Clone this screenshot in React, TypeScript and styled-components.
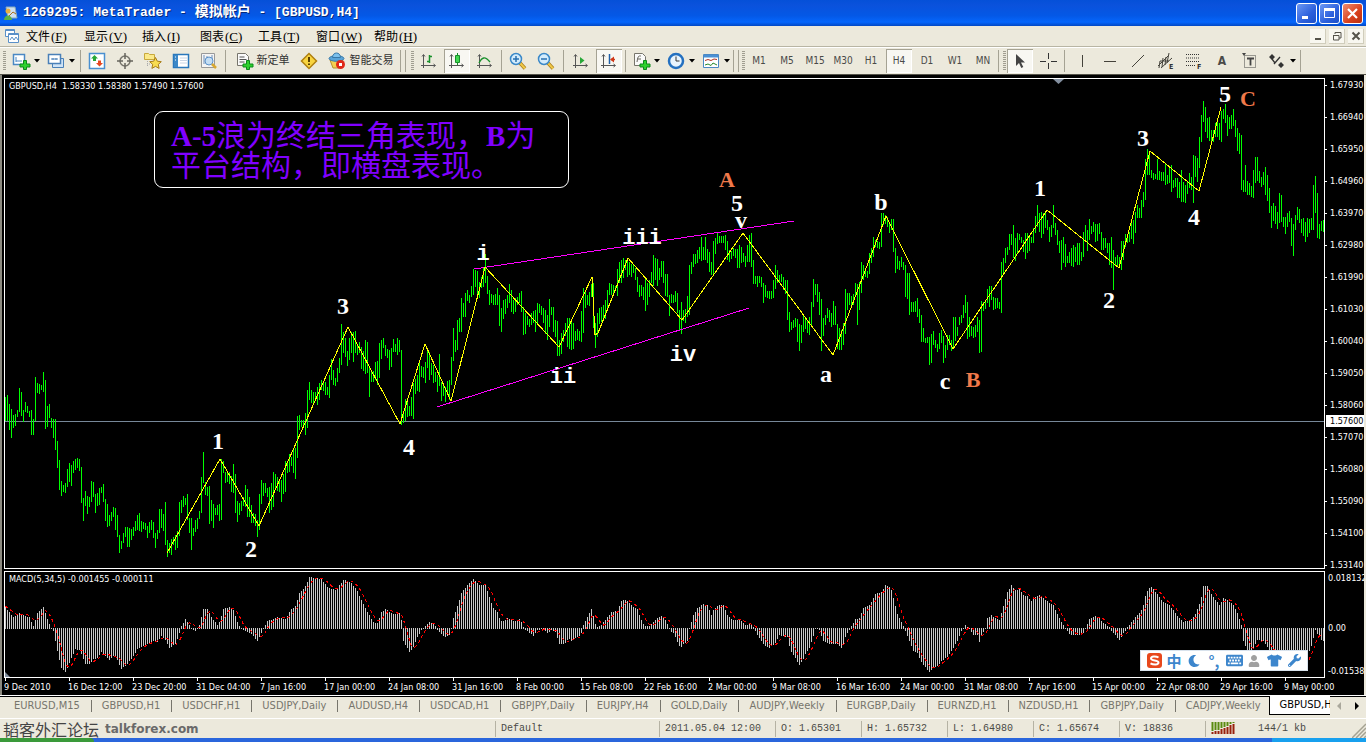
import React from "react";
import styled, { createGlobalStyle } from "styled-components";
import { FaKeyboard, FaMoon, FaTshirt, FaUser, FaWrench } from "react-icons/fa";

const UI = `"DejaVu Sans Condensed", "DejaVu Sans", sans-serif`;
const MONO = `"Liberation Mono", "Noto Sans CJK SC", monospace`;
const CJK = `"Noto Sans CJK SC", sans-serif`;
const SERIF = `"Liberation Serif", "Noto Sans CJK SC", serif`;
const FACE = "#ece9dc";

/* ---------- market data ---------- */

// High and low of each bar, as chart rows; one run per stretch of history.
const priceRuns: { start: number; bars: string }[] = [
  {
    start: 5,
    bars:
      "397,421 395,421 404,430 409,438 415,428 414,426 410,417 388,412 392,416 410,422 402,412 406,413 411,417 410,435 419,435 377,421 383,393 384,394 385,390 372,392 380,429 406,427 404,418 418,428 419,438 419,450 441,468 460,490 481,496 485,492 483,493 469,487 463,482 465,486 461,473 459,470 458,468 459,471 467,503 498,521 491,506 496,514 497,507 481,502 482,497 494,513 493,506 488,505 487,493 484,502 499,521 504,527 515,526 512,521 507,517 508,530 515,537 535,553 541,549 533,543 527,537 527,547 528,547 529,540 527,536 521,531 515,530 513,531 521,532 522,529 523,530 526,538 522,533 520,530 522,538 533,548 530,539 509,533 509,528 514,531 502,545 540,557 543,553 539,555 537,545 535,550 531,548 502,536 500,513 496,507 498,505 494,520 518,533 518,550 528,536 520,532 518,529 511,519 477,513 452,483 482,495 487,496 486,524 500,521 504,528 508,515 505,515 504,521 459,520 461,473 472,483 473,482 472,484 476,492 464,493 474,513 501,522 503,515 501,511 497,506 485,507 489,517 497,517 505,523 513,523 514,526 520,537 494,530 480,504 483,496 483,493 488,497 487,513 483,510 472,507 474,489 477,491 480,492 480,502 474,494 461,492 463,473 454,472 457,466 448,473 448,479 416,458 415,430 420,427 420,427 413,435 390,428 382,400 390,403 392,403 392,400 387,405 383,400 380,390 382,391 382,395 387,395 375,398 359,380 370,385 378,386 368,382",
  },
  {
    start: 339,
    bars:
      "358,373 324,365 332,353 338,357 351,366 338,360 332,353 332,362 331,353 344,355 342,353 347,369 351,371 340,374 342,373 366,397 370,382 371,382 362,380 361,385 343,378 340,359 338,348 345,356 349,358 350,370 348,367 339,352 344,352 338,355 340,352 350,425 413,423 399,421 401,417 406,416 397,416 383,419 379,394 375,391 361,392 366,377 367,378 362,383 348,368 352,380 363,375 365,383 372,382 375,392 354,386 382,401 386,396 387,402 381,395 380,400 357,385 328,361 340,352 320,350 318,332 298,332 303,317 293,317 290,301 295,303 286,297",
  },
  {
    start: 473,
    bars:
      "269,295 270,287 271,297 282,298 277,288 268,287 254,283 276,294 290,305 294,303 295,305 294,305 288,305 295,326 308,332 300,319 299,314 295,308 284,303 290,312 300,314 298,312 297,305 293,303 291,312 307,335 313,334 316,325 319,327 313,325 311,323 310,332 303,323 304,313 306,315 308,323 310,334 315,340 299,327 307,315 307,332 320,337 321,356 340,356 333,354 330,342 323,336 318,347 318,349 320,350 323,349 331,341 329,340 331,341 311,342 288,333 290,308 295,305 292,306 284,297 283,328 323,348 313,337 308,324 307,322 305,320 300,319 290,310 283,295 284,295 285,293 286,291 269,296 262,283 260,283 258,278 260,270 261,277 262,275 264,277 265,273 268,280 277,292 285,297 285,296 287,300 279,311 283,305 280,297 272,283 255,286 258,280 259,286 268,280 261,277 261,283 274,296 274,297 295,316 294,303 295,303 291,302 293,313 310,331 302,334 310,321 309,323 296,317 265,315 262,274 254,267 254,264 250,263 247,259 237,261 247,260 237,260 249,263 252,272 262,275 241,274 238,254 232,244 236,243 236,243 236,243 235,250 241,260 250,262 251,259 248,256 249,258 249,268 245,268 247,263 253,262 256,267 245,262 235,262 233,267 260,284 276,284 276,287 276,283 277,287 283,303 285,297 291,298 291,299 291,299 280,298 265,289 270,283 275,283 274,282 277,290 280,294 280,320 312,332 322,330 320,328 318,327 319,342 324,351 325,343 315,332 317,329 320,333 317,335 302,327 279,307 284,295 284,302 292,315 299,351 318,336 315,325 308,318 310,322 313,327 301,325 306,325 324,349 328,350 330,350 323,345 289,334 293,310 293,305 296,306 294,305 283,297 284,325 282,310",
  },
  {
    start: 861,
    bars:
      "262,293 265,280 270,277 271,278 253,274 248,263 237,257 240,247 241,248 242,249 213,247 213,225 215,224 217,227 224,233 219,230 219,252 248,273 256,269 261,270 257,267 262,270 265,297 273,299 273,315 302,312 302,312 301,312 298,317 309,323 315,342 328,342 338,343 337,343 337,365 334,363 331,345 340,348 344,352 333,349 330,343 336,363 345,358 335,350 335,345 340,351 317,347 317,341 327,336 317,325 315,323 305,318 295,313 302,339 317,337 326,336 327,338 325,337 317,332 320,353 301,352 302,311 300,309 289,303 286,307 286,300 297,310 298,309 298,308 302,309 262,313 258,273 248,263 247,255 234,250 234,245 225,258 238,261 233,253 234,240 237,243 240,252 233,259 233,253 235,251 237,243 228,243 216,233 205,227 213,232 212,238 213,234 213,228 220,230 227,242 225,237 205,228 223,235 230,245 241,253 240,270 237,263 244,267 256,263 252,263 248,266 245,267 247,262 243,265 243,265 252,261 232,257 225,240 230,251 219,240 226,234 222,232 224,242 224,241 223,234 232,250 238,250 238,248 243,253 243,265 237,268 250,290 257,265 255,267 257,267 241,270 241,260 234,247 234,243 232,242 223,239 220,244 212,233 205,218 208,218 200,218 192,207 159,200 149,175 152,175 170,178 173,180 174,179 159,180 171,180 172,181 172,181 164,185 175,184 168,183 165,192 180,188 178,187 178,198 182,198 170,202 182,202 185,203 182,194 173,188 177,190 155,203 156,177 158,182 137,168 115,142 101,122 107,132 118,138 117,141 130,141 130,142 123,137 120,137 123,140 111,142 109,119 104,123 115,136 117,129 115,129 109,126 120,137 128,151 133,154 135,190 180,192 165,192 181,195 183,195 186,197 170,198 157,183 157,181 171,183 177,187 172,185 167,195 175,201 188,213 206,228 203,221 206,224 212,229 193,223 195,222 217,227 217,234 213,227 211,222 218,246 224,256 215,230 207,220 209,223 219,233 218,236 222,242 218,237 219,233 218,230 185,230 176,213 193,238 224,239 221,231 220,232",
  },
];

const pricePath = priceRuns
  .map(({ start, bars }) =>
    bars
      .split(" ")
      .map((b, i) => {
        const [hi, lo] = b.split(",");
        return `M${start + i * 2 + 0.5} ${hi}V${lo}`;
      })
      .join("")
  )
  .join("");

// Turning points of the oscillator: column, row.
const macdPoints: number[][] = (
  "5,606 7,610 13,617 19,613 25,616 29,617 33,626 37,613 43,607 47,619 50,627 53,630 57,650 61,667 65,671 69,662 75,648 79,649 81,653 85,663 89,663 93,658 97,657 101,651 105,655 109,659 113,655 116,657 119,664 121,668 127,663 133,655 137,648 145,644 153,640 157,641 161,635 165,639 169,647 175,643 179,632 181,626 185,619 189,625 192,629 195,630 199,625 203,609 207,609 211,617 217,625 220,620 223,609 229,607 233,610 237,622 240,628 247,631 251,633 257,640 261,632 267,621 273,619 277,617 285,619 291,609 295,606 299,593 303,589 307,582 309,577 321,579 327,587 335,590 341,583 344,579 351,583 357,591 361,600 367,612 373,622 377,623 381,612 385,609 393,614 399,613 401,620 403,640 409,651 413,646 417,636 421,629 425,626 429,622 433,623 437,629 441,633 445,636 450,633 453,618 457,606 461,593 467,585 473,579 476,582 479,585 485,585 489,597 493,608 497,612 500,621 503,621 507,618 511,620 515,621 520,619 523,627 527,630 533,635 537,629 543,628 547,632 551,629 555,631 559,643 564,643 568,637 571,640 574,637 580,635 583,625 587,617 591,609 594,620 596,628 601,625 607,617 611,612 617,611 621,601 624,599 629,603 633,607 637,609 640,618 644,626 649,626 653,622 657,618 662,616 665,620 670,630 674,633 677,641 680,647 683,643 687,640 689,628 693,615 697,608 703,604 707,605 711,615 713,610 718,605 723,605 727,615 732,620 740,620 746,626 750,623 755,630 759,637 764,644 769,647 775,642 779,634 783,635 787,636 790,650 795,657 799,664 802,660 805,653 809,647 813,635 815,628 820,629 822,640 830,643 837,643 842,648 845,636 848,630 851,626 855,619 859,618 863,608 870,604 875,594 881,592 885,585 889,587 891,590 893,598 897,614 901,622 905,630 909,640 913,650 917,652 921,661 925,666 929,671 933,666 937,665 941,660 947,656 951,650 957,640 961,630 965,625 969,628 973,634 977,634 979,641 981,634 985,628 987,618 991,615 995,618 999,620 1003,606 1007,592 1011,585 1015,590 1019,589 1023,595 1027,596 1031,601 1035,597 1039,595 1043,598 1048,602 1053,605 1057,614 1061,622 1065,628 1070,634 1082,634 1085,628 1089,619 1094,616 1099,618 1103,623 1109,627 1113,632 1119,639 1123,632 1127,627 1131,622 1137,615 1142,609 1146,592 1150,586 1153,589 1159,597 1163,602 1168,604 1173,610 1177,616 1183,622 1191,619 1195,614 1200,602 1203,586 1207,586 1211,594 1219,605 1223,598 1227,600 1233,605 1237,613 1241,625 1243,640 1247,649 1251,651 1257,639 1263,640 1270,650 1277,662 1283,668 1300,668 1307,655 1311,645 1315,629 1320,638 1323,640"
)
  .split(" ")
  .map((p) => p.split(",").map(Number));

const macdAt = (x: number): number => {
  const i = Math.max(1, macdPoints.findIndex((p) => p[0] >= x));
  const [x0, y0] = macdPoints[i - 1];
  const [x1, y1] = macdPoints[i];
  return y0 + ((y1 - y0) * (x - x0)) / (x1 - x0);
};

const ZERO = 628;
const macdColumns = Array.from({ length: 660 }, (_, i) => 5 + i * 2);
const macdValues = macdColumns.map(macdAt);
const macdPath = macdColumns
  .map((x, i) => {
    const y = Math.round(macdValues[i]);
    return y < ZERO ? `M${x + 0.5} ${y}V${ZERO + 1}` : `M${x + 0.5} ${ZERO}V${y + 1}`;
  })
  .join("");
const signalPath = macdColumns
  .map((x, i) => {
    const part = macdValues.slice(Math.max(0, i - 4), i + 1);
    const y = part.reduce((a, b) => a + b, 0) / part.length;
    return `${i ? "L" : "M"}${x + 0.5} ${y.toFixed(1)}`;
  })
  .join("");

const waves: [string, number, number, ("digit" | "roman" | "major")][] = [
  ["1", 218, 449, "digit"], ["2", 251, 557, "digit"], ["3", 343, 314, "digit"], ["4", 409, 455, "digit"],
  ["i", 483, 260, "roman"], ["ii", 563, 383, "roman"], ["iii", 642, 244, "roman"], ["iv", 683, 361, "roman"],
  ["v", 741, 228, "digit"], ["5", 737, 211, "digit"], ["a", 826, 382, "digit"], ["b", 881, 210, "digit"],
  ["c", 945, 389, "digit"], ["1", 1040, 196, "digit"], ["2", 1109, 308, "digit"], ["3", 1143, 146, "digit"],
  ["4", 1194, 225, "digit"], ["5", 1225, 102, "digit"],
  ["A", 727, 187, "major"], ["B", 973, 387, "major"], ["C", 1248, 106, "major"],
];
const waveStyle = {
  digit: { fill: "#fff", fontSize: 24, fontFamily: SERIF },
  roman: { fill: "#fff", fontSize: 22, fontFamily: MONO },
  major: { fill: "#f0794a", fontSize: 22, fontFamily: SERIF },
};

const prices = ["1.67930", "1.66940", "1.65950", "1.64960", "1.63970", "1.62980", "1.61990", "1.61030", "1.60040", "1.59050", "1.58060", "1.57070", "1.56080", "1.55090", "1.54100", "1.53140"];
const times = ["9 Dec 2010", "16 Dec 12:00", "23 Dec 20:00", "31 Dec 04:00", "7 Jan 16:00", "17 Jan 00:00", "24 Jan 08:00", "31 Jan 16:00", "8 Feb 00:00", "15 Feb 08:00", "22 Feb 16:00", "2 Mar 00:00", "9 Mar 08:00", "16 Mar 16:00", "24 Mar 00:00", "31 Mar 08:00", "7 Apr 16:00", "15 Apr 00:00", "22 Apr 08:00", "29 Apr 16:00", "9 May 00:00"];
const tabs = ["EURUSD,M15", "GBPUSD,H1", "USDCHF,H1", "USDJPY,Daily", "AUDUSD,H4", "USDCAD,H1", "GBPJPY,Daily", "EURJPY,H4", "GOLD,Daily", "AUDJPY,Weekly", "EURGBP,Daily", "EURNZD,H1", "NZDUSD,H1", "GBPJPY,Daily", "CADJPY,Weekly"];
const menus: [string, string][] = [["文件", "F"], ["显示", "V"], ["插入", "I"], ["图表", "C"], ["工具", "T"], ["窗口", "W"], ["帮助", "H"]];

/* ---------- frame ---------- */

const Global = createGlobalStyle`
  * { box-sizing: border-box; }
  body { margin: 0; background: ${FACE}; }
  button { font: inherit; color: inherit; margin: 0; padding: 0; border: 0; background: none; }
`;

const Page = styled.div`
  display: flex;
  flex-direction: column;
  height: 100vh;
  overflow: hidden;
  font-family: ${UI};
  white-space: nowrap;
`;

const TitleBar = styled.header`
  display: flex;
  align-items: center;
  flex: none;
  height: 26px;
  padding: 0 3px 0 4px;
  background: linear-gradient(#0550d8, #0a52dc 20%, #0458e6 60%, #0566fc 85%, #0348c4);
  color: #fff;
  font: bold 13px/26px ${MONO};
  text-shadow: 1px 1px 0 #06287a;
`;
const Title = styled.h1`
  flex: 1;
  margin: 0 0 0 5px;
  font: inherit;
  white-space: pre;
`;
const TitleCjk = styled.span`
  font: bold 14px/20px ${CJK};
`;
const Caption = styled.button<{ $close?: boolean }>`
  display: grid;
  place-items: center;
  width: 21px;
  height: 21px;
  margin-left: 2px;
  border: 1px solid #fff;
  border-radius: 3px;
  background: ${(p) => (p.$close ? "linear-gradient(135deg,#f08c70,#d8401c 60%,#b83010)" : "linear-gradient(135deg,#6c98f4,#2c60dc 60%,#1c50c8)")};
`;

const MenuBar = styled.nav`
  display: flex;
  align-items: center;
  flex: none;
  height: 21px;
  padding: 0 2px 0 4px;
  border-bottom: 1px solid #b8b5a4;
  background: ${FACE};
`;
const MenuItem = styled.button`
  width: 58px;
  text-align: left;
  font: 12px/18px ${CJK};
  color: #000;
`;
const Mnemonic = styled.span`
  font: 13px/16px ${SERIF};
  margin-left: 1px;
`;
const MenuFill = styled.div`
  flex: 1;
`;
const ChildButton = styled.button`
  display: grid;
  place-items: center;
  width: 16px;
  height: 15px;
  margin-left: 3px;
  background: #f8f7f0;
  border-right: 1px solid #d0cdbc;
  border-bottom: 1px solid #d0cdbc;
`;

const Toolbar = styled.div`
  display: flex;
  align-items: center;
  flex: none;
  height: 28px;
  border-bottom: 1px solid #55534a;
  background: ${FACE};
  border-top: 1px solid #fff;
`;
const Grip = styled.span<{ $w: number }>`
  flex: none;
  width: ${(p) => p.$w}px;
  height: 20px;
  background: repeating-linear-gradient(#a09d90 0 1px, transparent 1px 2px) 3px 0 / 3px 20px no-repeat;
`;
const Rule = styled.span<{ $w: number; $end?: boolean }>`
  flex: none;
  display: flex;
  justify-content: center;
  width: ${(p) => p.$w}px;
  &::before {
    content: "";
    width: ${(p) => (p.$end ? 4 : 1)}px;
    height: 22px;
    border-left: 1px solid #a5a293;
    border-right: ${(p) => (p.$end ? "1px solid #a5a293" : "0")};
  }
`;
const Tool = styled.button<{ $w?: number; $on?: boolean }>`
  display: flex;
  align-items: center;
  justify-content: center;
  gap: 4px;
  flex: none;
  width: ${(p) => p.$w ?? 28}px;
  height: 24px;
  color: #4a4a48;
  font: 10px/24px ${UI};
  ${(p) => p.$on && "background:#f8f7f2; box-shadow: inset 1px 1px 0 #a5a293, inset -1px -1px 0 #fff; border: solid transparent; border-width: 0 1px;background-clip:padding-box;"}
`;
const ToolText = styled.span`
  font: 11px/20px ${CJK};
  color: #333;
  padding-bottom: 4px;
`;

/* ---------- chart ---------- */

const ChartWindow = styled.main`
  flex: 1;
  min-height: 0;
  display: grid;
  grid-template-columns: minmax(0, 1fr) 39px;
  grid-template-rows: minmax(0, 1fr) 107px 17px;
  row-gap: 2px;
  padding: 3px 0 0 2px;
  border-left: 2px solid #8c8a80;
  border-right: 2px solid ${FACE};
  background: #000;
  color: #fff;
  font: 9px/12px ${UI};
  margin-bottom: -2px;
`;
const Pane = styled.section`
  position: relative;
  min-height: 0;
  border: 1px solid #fff;
  overflow: hidden;
`;
const Plot = styled.svg`
  display: block;
  width: 100%;
  height: 100%;
`;
const PaneTitle = styled.h2`
  position: absolute;
  left: 4px;
  top: 1px;
  margin: 0;
  font: inherit;
  white-space: pre;
`;
const Note = styled.p`
  position: absolute;
  left: 149px;
  top: 32px;
  width: 415px;
  height: 77px;
  margin: 0;
  padding: 6px 0 0 16px;
  border: 1px solid #fff;
  border-radius: 9px;
  color: #8000ff;
  font: 30px/30px ${CJK};
`;
const NoteLatin = styled.span`
  font-weight: bold;
  font-size: 29px;
  font-family: ${SERIF};
  line-height: 1px;
`;
const PriceAxis = styled.div`
  position: relative;
  overflow: hidden;
`;
const Price = styled.div`
  display: flex;
  align-items: center;
  height: 32px;
  gap: 3px;
  &:first-child { margin-top: -9px; }
  &::before {
    content: "";
    width: 2px;
    height: 1px;
    background: #fff;
  }
`;
const CurrentPrice = styled.output`
  position: absolute;
  left: 1px;
  right: 0;
  top: 337px;
  height: 12px;
  padding-left: 4px;
  background: #fff;
  color: #000;
`;
const MacdAxis = styled.div`
  display: flex;
  flex-direction: column;
  justify-content: space-between;
  padding: 1px 0 1px 3px;
  overflow: hidden;
`;
const ZeroLabel = styled.span`
  padding-top: 6px;
`;
const TimeAxis = styled.div`
  grid-column: 1 / -1;
  display: flex;
  margin-top: -2px;
  overflow: hidden;
`;
const Time = styled.span`
  flex: none;
  width: 64px;
  padding-top: 3px;
  background: linear-gradient(#fff, #fff) 1px 0 / 1px 3px no-repeat;
`;

const Ime = styled.aside`
  position: fixed;
  right: 58px;
  bottom: 71px;
  display: flex;
  align-items: center;
  justify-content: space-around;
  width: 168px;
  height: 21px;
  padding: 0 3px;
  background: #fff;
  border: 1px solid #d8e2ec;
  color: #3d86cc;
  font: bold 15px/18px ${CJK};
`;
const ImeButton = styled.button<{ $muted?: boolean }>`
  display: grid;
  place-items: center;
  width: 19px;
  height: 18px;
  color: ${(p) => (p.$muted ? "#a0a0a0" : "#3d86cc")};
`;

/* ---------- bottom ---------- */

const Tabs = styled.div`
  position: relative;
  display: flex;
  flex: none;
  height: 23px;
  border-top: 1px solid #fff;
  box-shadow: inset 0 1px 0 #000;
  background: ${FACE};
  padding-left: 4px;
  font: 11px/20px ${UI};
  color: #77756c;
`;
const TabStrip = styled.div`
  display: flex;
  flex: 1;
  min-width: 0;
  overflow: hidden;
`;
const Tab = styled.button<{ $active?: boolean }>`
  flex: none;
  display: flex;
  align-items: center;
  height: 20px;
  padding-left: 10px;
  ${(p) => p.$active && "height:19px;background:#fff;color:#000;border:1px solid #000;border-width:0 0 1px 1px;"}
  &::after {
    content: "";
    width: 1px;
    height: 12px;
    margin-left: 11px;
    background: ${(p) => (p.$active ? "none" : "#77756c")};
  }
  &:nth-last-child(2)::after { background: none; margin-left: 7px; }
`;
const Scroll = styled.button`
  display: grid;
  place-items: center;
  width: 18px;
  height: 20px;
`;

const StatusBar = styled.footer`
  display: flex;
  flex: none;
  align-items: center;
  height: 20px;
  border-top: 1px solid #fff;
  background: ${FACE};
  color: #4a4a46;
  font: 10px/18px ${MONO};
`;
const Cell = styled.div<{ $w: number }>`
  flex: none;
  width: ${(p) => p.$w}px;
  height: 16px;
  padding-left: 5px;
  line-height: 16px;
  border-left: 1px solid #b5b2a3;
`;
const Traffic = styled.span`
  flex: none;
  width: 99px;
  padding-left: 5px;
`;
const Mark = styled.div`
  flex: 1;
  display: flex;
  align-items: center;
  gap: 6px;
  padding-left: 3px;
  color: #444;
  font: 16px/18px ${CJK};
`;
const MarkLatin = styled.b`
  color: #6a6a6a;
  font: bold 12px/18px "DejaVu Sans", sans-serif;
`;
const TaskBar = styled.div`
  display: flex;
  flex: none;
  height: 4px;
  background: #2a66dc;
`;
const Start = styled.span`
  width: 94px;
  border-radius: 0 4px 0 0;
  background: #3a9a3a;
`;
const Tray = styled.span`
  width: 94px;
  margin-left: auto;
  background: #18a0ee;
`;

/* ---------- drawings ---------- */

const Arrow = () => (
  <svg width="6" height="4"><path d="M0 0h6L3 3.500z" fill="#000" /></svg>
);
const I = ({ children, w = 18 }: { children: React.ReactNode; w?: number }) => (
  <svg width={w} height="18" viewBox={`0 0 ${w} 18`} fill="none" overflow="visible">{children}</svg>
);
const plus = <path d="M8 13h3.500v-3.500h3V13H18v3h-3.500v2.500h-3V16H8z" transform="translate(0 -1)" fill="#2ed02e" stroke="#0a8a1a" />;
const sheet = <path d="M2.500 1.500h8l3 3v9h-11z" fill="#fafafa" stroke="#77756c" />;
const axes = <path d="M3.500 3v13M1 13.500h14M2 4.500l1.500-2 1.500 2M13.500 12l2 1.500-2 1.500" stroke="#555" />;

const NewChart = () => <I><path d="M1.500 2.500h11v10h-11z" fill="#fff" stroke="#4a88c4" strokeWidth="1.500" /><path d="M4 5v5M4 9h6" stroke="#4a88c4" />{plus}</I>;
const Profiles = () => <I><path d="M5.500 6.500h11v9h-11z" fill="#cfe3f6" stroke="#4a80b8" /><path d="M1.500 2.500h12v9h-12z" fill="#fff" stroke="#4a80b8" strokeWidth="1.500" /><path d="M4 7h7M6 6v2M9 6v2" stroke="#4a80b8" /></I>;
const Market = () => <I><path d="M1.500 1.500h15v15h-15z" fill="#fff" stroke="#4a90d0" strokeWidth="1.500" /><path d="M6.500 3L10 6.500H8V9H5V6.500H3z" fill="#28a838" /><path d="M11.500 14.500L8 11h2V8.500h3V11h2z" fill="#e84820" /></I>;
const Target = () => <I><circle cx="9" cy="9" r="5" stroke="#77756c" strokeWidth="1.500" /><path d="M9 1v6M9 11v6M1 9h6M11 9h6" stroke="#66645c" strokeWidth="1.500" /></I>;
const Navigator = () => <I><path d="M.5 1.500h4l1 1h5v5H.5z" fill="#fbe98a" stroke="#c8a83c" /><path d="M3.500 9v6M3 12h3" stroke="#aaa" strokeDasharray="1 1" /><path d="M11.500 5.500l1.800 3.700 4 .5-3 2.700.8 4-3.600-2-3.600 2 .8-4-3-2.700 4-.5z" fill="#f8dc50" stroke="#a87c18" /></I>;
const Terminal = () => <I><path d="M1.500 2.500h15v13h-15z" fill="#fff" stroke="#2a78bc" strokeWidth="1.500" /><path d="M2 3h4v12H2z" fill="#3c88c8" /><path d="M8 6h7M8 8.500h7M8 11h7" stroke="#c8d4e4" /><path d="M3 5h1M3 8h1" stroke="#fff" /></I>;
const Tester = () => <I><path d="M1.500 1.500h13v14h-13z" fill="#f4f4f4" stroke="#999" /><path d="M4 3v9M7 4v8M12 3v5" stroke="#7090b8" /><circle cx="9" cy="9" r="4" fill="#c4def4" stroke="#5a90c8" /><path d="M12 12l4 4" stroke="#d8a830" strokeWidth="2.500" /></I>;
const NewOrder = () => <I>{sheet}<path d="M4.500 5h5M4.500 7.500h7M4.500 10h5" stroke="#555" />{plus}</I>;
const Caution = () => <I><path d="M9 1.500L16.500 9 9 16.500 1.500 9z" fill="#f8d440" stroke="#b08010" strokeWidth="1.500" /><path d="M9 5v5M9 11.500v1.500" stroke="#5a4000" strokeWidth="2" /></I>;
const Expert = () => <I><path d="M2 8h13l-4 8H5z" fill="#f4d050" stroke="#b89030" /><ellipse cx="8.500" cy="6.500" rx="7.500" ry="2.800" fill="#5aa4d8" stroke="#3878a8" /><path d="M4.500 5.500c0-6 8-6 8 0z" fill="#7cc0ec" stroke="#3878a8" /><circle cx="12.500" cy="12.500" r="4.500" fill="#e02818" /><path d="M11 11h3v3h-3z" fill="#fff" /></I>;
const BarsIcon = () => <I>{axes}<path d="M9.500 3v8M7 9.500h2.500M9.500 4.500H12" stroke="#18902a" strokeWidth="1.500" /></I>;
const Candles = () => <I>{axes}<path d="M9.500 1v12" stroke="#18902a" /><path d="M7.500 3.500h4v7h-4z" fill="#40d850" stroke="#18902a" /></I>;
const LineIcon = () => <I>{axes}<path d="M3 11c3-6 6-7 11-1" stroke="#18902a" strokeWidth="1.300" /></I>;
const Zoom = ({ out }: { out?: boolean }) => <I><path d="M11 11l5 5.500" stroke="#a87c18" strokeWidth="3.500" /><path d="M11 11l5 5.500" stroke="#f0c848" strokeWidth="2" /><circle cx="7" cy="7" r="5.500" fill="#d4ecfc" stroke="#3a88c8" strokeWidth="1.500" /><path d={out ? "M4 7h6" : "M4 7h6M7 4v6"} stroke="#2870b0" strokeWidth="1.500" /></I>;
const Scrolling = () => <I>{axes}<path d="M8 5l4.500 3.500L8 12z" fill="#28a838" /></I>;
const Shift = () => <I>{axes}<path d="M9.500 2v10" stroke="#2060a8" strokeWidth="1.500" /><path d="M15 7.500h-4" stroke="#d03818" strokeWidth="1.500" /><path d="M14 4.500v6l-4-3z" fill="#d03818" /></I>;
const Indicators = () => <I>{sheet}<path d="M5 10c1-7 2-6 4-6M5 7h4" stroke="#66645c" />{plus}</I>;
const Clock = () => <I><circle cx="9" cy="9" r="7" fill="#e8f4fe" stroke="#2470c0" strokeWidth="2.500" /><path d="M9 4.500V9h3.500" stroke="#333" /></I>;
const Template = () => <I><path d="M1.500 2.500h15v13h-15z" fill="#fff" stroke="#4a88c4" /><path d="M2 3h14v2.500H2z" fill="#4a90d4" /><path d="M3 8.500l3-1 3 1 3-1.500 3 .5" stroke="#b03020" /><path d="M3 13l3-1 3 1.500 2-2.500 4 2" stroke="#28882c" /></I>;
const Cursor = () => <I><path d="M5 2v12l3-3 2.300 5 2-1-2.300-4.500H14z" fill="#444" /></I>;
const Cross = () => <I><path d="M9.500 1v6M9.500 11v6M1 9.500h6M12 9.500h6" stroke="#333" /></I>;
const Stroke = ({ d }: { d: string }) => <I><path d={d} stroke="#44423a" /></I>;
const Letter = styled.tspan`
  font: bold 7px ${UI};
`;
const Channel = () => <I><path d="M1 14L11 4M4 16L15 6M3 9l-1 7M6 6l-1 9M9 5l-1 8M12 1l-2 10M3 9h9" stroke="#44423a" /><text x="12" y="17" fill="#333"><Letter>E</Letter></text></I>;
const Fibo = () => <I><path d="M1 2.500h14M1 6h14M1 9.500h14M1 13.500h9" stroke="#333" strokeDasharray="1 1" /><text x="12" y="17" fill="#333"><Letter>F</Letter></text></I>;
const Label = () => <I><path d="M3.500 3.500h11v12h-11z" stroke="#444" strokeDasharray="1 1" /><path d="M6 6.500h7M9.500 6.500v7" stroke="#444" strokeWidth="1.800" /><path d="M1 1h4L3 4z" fill="#444" /></I>;
const Arrows = () => <I><path d="M1 5l3-3 3 3-3 3zM10 13l3-3 3 3-3 3z" fill="#333" /><path d="M6 12l6-7M4 7l3 4" stroke="#333" strokeWidth="1.300" /></I>;
const GlyphA = styled.span`
  font: bold 12px/24px ${UI};
`;

export default function App() {
  return (
    <Page>
      <Global />
      <TitleBar>
        <svg width="14" height="16"><path d="M2 2h9l2 11H4z" fill="#cfe0f0" stroke="#8ab" /><circle cx="4" cy="6" r="2.500" fill="#e8b040" /><path d="M0 15c0-6 8-6 8 0z" fill="#58b048" /><path d="M5 11l4-4 3 2" stroke="#a8701c" fill="none" /></svg>
        <Title>1269295: MetaTrader - <TitleCjk>模拟帐户</TitleCjk> - [GBPUSD,H4]</Title>
        <Caption aria-label="Minimize"><svg width="13" height="13"><path d="M2 9h6v3H2z" fill="#fff" /></svg></Caption>
        <Caption aria-label="Maximize"><svg width="13" height="13"><path d="M1.500 2.500h10v8h-10z" fill="none" stroke="#fff" /><path d="M1 1h11v3H1z" fill="#fff" /></svg></Caption>
        <Caption $close aria-label="Close"><svg width="13" height="13"><path d="M2 2l9 9M11 2l-9 9" stroke="#fff" strokeWidth="2.200" /></svg></Caption>
      </TitleBar>

      <MenuBar>
        <svg width="22" height="16" fill="none"><path d="M1.500 1.500h9v7h-9z" fill="#fff" stroke="#5a90c8" /><path d="M4.500 5.500h10v9h-10z" fill="#fff" stroke="#5a90c8" /><path d="M1 2.500h10M4 6.500h11M6 12l2-3 2 3 2-3 2 3" stroke="#5a90c8" /></svg>
        {menus.map(([name, key]) => (
          <MenuItem key={key}>{name}<Mnemonic>(<u>{key}</u>)</Mnemonic></MenuItem>
        ))}
        <MenuFill />
        <ChildButton aria-label="Minimize chart"><svg width="10" height="10"><path d="M2 8h6" stroke="#55534a" strokeWidth="2" /></svg></ChildButton>
        <ChildButton aria-label="Restore chart"><svg width="10" height="10" fill="none" stroke="#55534a"><path d="M3 3V1.500h6V7H7M1 4.500h6v4.500H1.500V4" /></svg></ChildButton>
        <ChildButton aria-label="Close chart"><svg width="10" height="10"><path d="M1.500 1.500l7 7M8.500 1.500l-7 7" stroke="#55534a" strokeWidth="2" /></svg></ChildButton>
      </MenuBar>

      <Toolbar>
        <Grip $w={8} />
        <Tool $w={35} aria-label="New chart"><NewChart /><Arrow /></Tool>
        <Tool $w={35} aria-label="Profiles"><Profiles /><Arrow /></Tool>
        <Rule $w={5} />
        <Tool aria-label="Market watch"><Market /></Tool>
        <Tool aria-label="Data window"><Target /></Tool>
        <Tool aria-label="Navigator"><Navigator /></Tool>
        <Tool aria-label="Terminal"><Terminal /></Tool>
        <Tool aria-label="Tester"><Tester /></Tool>
        <Rule $w={6} />
        <Tool $w={66}><NewOrder /><ToolText>新定单</ToolText></Tool>
        <Tool aria-label="Editor"><Caution /></Tool>
        <Tool $w={75}><Expert /><ToolText>智能交易</ToolText></Tool>
        <Rule $w={10} $end />
        <Grip $w={7} />
        <Tool aria-label="Bar chart"><BarsIcon /></Tool>
        <Tool $on aria-label="Candlesticks"><Candles /></Tool>
        <Tool aria-label="Line chart"><LineIcon /></Tool>
        <Rule $w={5} />
        <Tool aria-label="Zoom in"><Zoom /></Tool>
        <Tool aria-label="Zoom out"><Zoom out /></Tool>
        <Rule $w={7} />
        <Tool aria-label="Auto scroll"><Scrolling /></Tool>
        <Tool $on aria-label="Chart shift"><Shift /></Tool>
        <Rule $w={5} />
        <Tool $w={35} aria-label="Indicators"><Indicators /><Arrow /></Tool>
        <Tool $w={35} aria-label="Periodicity"><Clock /><Arrow /></Tool>
        <Tool $w={35} aria-label="Templates"><Template /><Arrow /></Tool>
        <Rule $w={6} $end />
        <Grip $w={6} />
        {["M1", "M5", "M15", "M30", "H1", "H4", "D1", "W1", "MN"].map((t) => (
          <Tool key={t} $on={t === "H4"}>{t}</Tool>
        ))}
        <Rule $w={3} />
        <Grip $w={6} />
        <Tool $on aria-label="Cursor"><Cursor /></Tool>
        <Tool aria-label="Crosshair"><Cross /></Tool>
        <Rule $w={6} />
        <Tool aria-label="Vertical line"><Stroke d="M9.500 3v12" /></Tool>
        <Tool aria-label="Horizontal line"><Stroke d="M3 9.500h12" /></Tool>
        <Tool aria-label="Trendline"><Stroke d="M3 15L15 3" /></Tool>
        <Tool aria-label="Channel"><Channel /></Tool>
        <Tool aria-label="Fibonacci"><Fibo /></Tool>
        <Tool><GlyphA>A</GlyphA></Tool>
        <Tool aria-label="Text label"><Label /></Tool>
        <Tool $w={35} aria-label="Arrows"><Arrows /><Arrow /></Tool>
        <Rule $w={4} />
      </Toolbar>

      <ChartWindow>
        <Pane>
          <Plot viewBox="5 79 1319 489" preserveAspectRatio="xMaxYMid slice">
            <path d="M5 421.500H1324" stroke="#778899" />
            <path d={pricePath} stroke="#00ff00" shapeRendering="crispEdges" />
            <path d="M474 269L794 221M437 407L749 308" stroke="#ff00ff" fill="none" shapeRendering="crispEdges" />
            <polyline
              points="167,553 220,459 259,526 348,327 400,424 425,344 451,401 485,267 559,347 592,277 595,335 598,333 628,258 682,320 743,233 833,355 886,216 953,349 1047,210 1119,268 1150,151 1199,191 1221,107"
              fill="none" stroke="#ffff00" shapeRendering="crispEdges"
            />
            <path d="M1053 79h11l-5.500 5z" fill="#8490a0" />
            {waves.map(([t, x, y, kind]) => (
              <text key={`${t}${x}`} x={x} y={y} textAnchor="middle" fontWeight="bold" {...waveStyle[kind]}>{t}</text>
            ))}
          </Plot>
          <PaneTitle>GBPUSD,H4  1.58330 1.58380 1.57490 1.57600</PaneTitle>
          <Note>
            <NoteLatin>A-5</NoteLatin>浪为终结三角表现，<NoteLatin>B</NoteLatin>为<br />平台结构，即横盘表现。
          </Note>
        </Pane>
        <PriceAxis>
          {prices.map((p) => <Price key={p}>{p}</Price>)}
          <CurrentPrice>1.57600</CurrentPrice>
        </PriceAxis>

        <Pane>
          <Plot viewBox="5 572 1319 105" preserveAspectRatio="xMaxYMid slice">
            <path d={macdPath} stroke="#c8c8c8" shapeRendering="crispEdges" />
            <path d={signalPath} fill="none" stroke="#ff0000" strokeDasharray="3 3" shapeRendering="crispEdges" />
            <path d="M5 672v5h5z" fill="#8490a0" />
          </Plot>
          <PaneTitle>MACD(5,34,5) -0.001455 -0.000111</PaneTitle>
        </Pane>
        <MacdAxis><span>0.018132</span><ZeroLabel>0.00</ZeroLabel><span>-0.01538</span></MacdAxis>

        <TimeAxis>{times.map((t) => <Time key={t}>{t}</Time>)}</TimeAxis>
      </ChartWindow>

      <Tabs>
        <TabStrip>
          {tabs.map((t, i) => <Tab key={i}>{t}</Tab>)}
          <Tab $active>GBPUSD,H4</Tab>
        </TabStrip>
        <Scroll aria-label="Previous"><svg width="5" height="8"><path d="M4 0v8L0 4z" fill="#aaa89c" /></svg></Scroll>
        <Scroll aria-label="Next"><svg width="5" height="8"><path d="M0 0v8l4-4z" fill="#000" /></svg></Scroll>
      </Tabs>

      <StatusBar>
        <Mark>韬客外汇论坛<MarkLatin>talkforex.com</MarkLatin></Mark>
        <Cell $w={164}>Default</Cell>
        <Cell $w={116}>2011.05.04 12:00</Cell>
        <Cell $w={86}>O: 1.65301</Cell>
        <Cell $w={86}>H: 1.65732</Cell>
        <Cell $w={86}>L: 1.64980</Cell>
        <Cell $w={86}>C: 1.65674</Cell>
        <Cell $w={86}>V: 18836</Cell>
        <Cell $w={48}>
          <svg width="24" height="14" viewBox="0 0 24 14"><path d="M1.500 1v9M4.500 1v8M7.500 1v8M10.500 1v6M13.500 1v5M16.500 1v4M19.500 1v2M22.500 1v1" stroke="#5a8a10" strokeWidth="2" /><path d="M1.500 11v2M4.500 10v3M7.500 10v3M10.500 8v5M13.500 7v6M16.500 6v7M19.500 4v9M22.500 3v10" stroke="#98200c" strokeWidth="2" /></svg>
        </Cell>
        <Traffic>144/1 kb</Traffic>
        <svg width="14" height="18"><path d="M0 18L14 4M4 18L14 8M8 18l6-6M12 18l2-2" stroke="#a5a293" strokeWidth="1.500" /></svg>
      </StatusBar>
      <TaskBar><Start /><Tray /></TaskBar>

      <Ime>
        <ImeButton aria-label="Input method"><svg width="17" height="17"><rect x="1" y="1" width="15" height="15" rx="3" fill="#e8481c" /><path d="M12.500 5.500C10 4 5 4 5 6.500s7.500 1.500 7.500 4-5 2.500-8 .8" stroke="#fff" strokeWidth="2" fill="none" /></svg></ImeButton>
        <ImeButton>中</ImeButton>
        <ImeButton aria-label="Width"><FaMoon size={12} /></ImeButton>
        <ImeButton>°,</ImeButton>
        <ImeButton aria-label="Keyboard"><FaKeyboard size={17} /></ImeButton>
        <ImeButton $muted aria-label="Account"><FaUser size={12} /></ImeButton>
        <ImeButton aria-label="Skin"><FaTshirt size={15} /></ImeButton>
        <ImeButton aria-label="Settings"><FaWrench size={13} /></ImeButton>
      </Ime>
    </Page>
  );
}
